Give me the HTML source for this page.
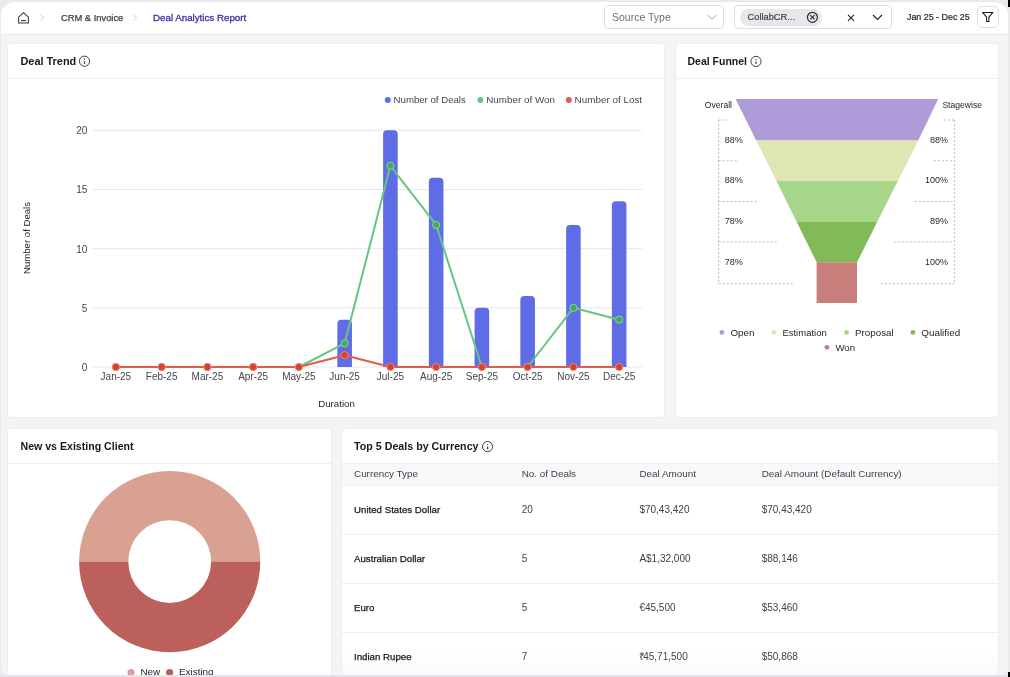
<!DOCTYPE html>
<html><head><meta charset="utf-8">
<style>
*{box-sizing:border-box;margin:0;padding:0}
html,body{width:1010px;height:677px;overflow:hidden;background:#e9eaec;font-family:"Liberation Sans",sans-serif;color:#27272a}
.abs{position:absolute}
#win{position:absolute;left:1px;top:2px;width:1007px;height:674px;background:#f3f4f6;border-radius:14px 14px 8px 8px;overflow:hidden}
#hdr{position:absolute;left:0;top:0;width:1007px;height:33px;background:#fff;border-bottom:1px solid #e8e9ec}
.card{position:absolute;background:#fff;border:1px solid #edeef1;border-radius:4px;overflow:hidden}
.ch{position:absolute;left:0;top:0;right:0;height:35px;border-bottom:1px solid #eceef0}
.title{position:absolute;font-weight:700;font-size:10.6px;color:#18181b;white-space:nowrap;line-height:12px}
.t{position:absolute;white-space:nowrap;line-height:12px}
svg{position:absolute;left:0;top:0}
svg text{font-family:"Liberation Sans",sans-serif}
.th{font-size:9.9px;color:#3f3f46}
.td{font-size:10px;color:#3f3f46}
.td1{font-size:9.7px;color:#18181b;-webkit-text-stroke:0.25px #18181b}
</style></head>
<body>
<div id="root" style="position:absolute;left:0;top:0;width:1010px;height:677px;will-change:transform">
<div id="win">
  <div id="hdr"></div>
</div>
<!-- black corner bits -->
<div class="abs" style="left:1008px;top:0;width:2px;height:7px;background:#000"></div>
<div class="abs" style="left:1008px;top:672px;width:2px;height:5px;background:#000"></div>

<!-- header content -->
<svg width="1010" height="40" style="position:absolute;left:0;top:0">
  <!-- home icon -->
  <path d="M18.6 17.2 L23.5 12.6 L28.4 17.2 V23 H18.6 Z" fill="none" stroke="#3f3f46" stroke-width="1.1" stroke-linejoin="round"/>
  <path d="M21 20.6 H26" stroke="#3f3f46" stroke-width="1.2"/>
  <!-- chevrons -->
  <path d="M40.5 14.8 L43.8 17.7 L40.5 20.6" fill="none" stroke="#cfd1d5" stroke-width="1"/>
  <path d="M133.3 14.8 L136.6 17.7 L133.3 20.6" fill="none" stroke="#cfd1d5" stroke-width="1"/>
</svg>
<div class="t" style="left:61px;top:12px;font-size:9.35px;color:#3f3f46;-webkit-text-stroke:0.25px #3f3f46">CRM &amp; Invoice</div>
<div class="t" style="left:153px;top:12px;font-size:9.75px;color:#3730a3;-webkit-text-stroke:0.3px #3730a3">Deal Analytics Report</div>

<!-- Source type -->
<div class="abs" style="left:604px;top:5px;width:120px;height:24px;border:1px solid #dcdee2;border-radius:4px;background:#fff"></div>
<div class="t" style="left:612px;top:10.8px;font-size:10.5px;color:#6b6e76">Source Type</div>
<!-- Collab -->
<div class="abs" style="left:734px;top:5px;width:158px;height:24px;border:1px solid #dcdee2;border-radius:4px;background:#fff"></div>
<div class="abs" style="left:740px;top:8.5px;width:82px;height:17px;border-radius:9px;background:#e6e7ea"></div>
<div class="t" style="left:747.5px;top:11px;font-size:9.3px;color:#3f3f46;-webkit-text-stroke:0.2px #3f3f46">CollabCR...</div>
<div class="t" style="left:907px;top:11px;font-size:8.9px;color:#27272a;-webkit-text-stroke:0.2px #27272a">Jan 25 - Dec 25</div>
<div class="abs" style="left:977px;top:6px;width:22px;height:22px;border:1px solid #dcdee2;border-radius:5px;background:#fff"></div>
<svg width="1010" height="40" style="position:absolute;left:0;top:0">
  <path d="M708 15.2 L712 19.2 L716 15.2" fill="none" stroke="#a1a4ab" stroke-width="1"/>
  <circle cx="812.4" cy="17.3" r="5" fill="none" stroke="#27272a" stroke-width="1.2"/>
  <path d="M810.3 15.2 L814.5 19.4 M814.5 15.2 L810.3 19.4" stroke="#27272a" stroke-width="1.1"/>
  <path d="M848 14.8 L854 20.8 M854 14.8 L848 20.8" stroke="#27272a" stroke-width="1.2"/>
  <path d="M873 15 L877.5 19.5 L882 15" fill="none" stroke="#27272a" stroke-width="1.2"/>
  <path d="M982.6 12.4 H992.9 L988.9 17.2 V21.4 L986.6 21.4 V17.2 Z" fill="none" stroke="#18181b" stroke-width="1.05" stroke-linejoin="round"/>
</svg>

<!-- Cards -->
<div class="card" style="left:7px;top:43px;width:658px;height:375px"><div class="ch"></div></div>
<div class="card" style="left:675px;top:43px;width:324px;height:375px"><div class="ch"></div></div>
<div class="card" style="left:7px;top:428px;width:325px;height:260px"><div class="ch"></div></div>
<div class="card" style="left:341px;top:428px;width:658px;height:260px"><div class="ch"></div></div>

<div class="title" style="left:20.5px;top:55px;font-size:10.9px">Deal Trend</div>
<div class="title" style="left:687.5px;top:55px;font-size:10.5px">Deal Funnel</div>
<div class="title" style="left:20.5px;top:439.6px;font-size:10.6px">New vs Existing Client</div>
<div class="title" style="left:354px;top:439.6px;font-size:10.7px">Top 5 Deals by Currency</div>
<svg width="1010" height="677" style="position:absolute;left:0;top:0">
<g fill="none" stroke="#3f3f46" stroke-width="1">
<circle cx="84.5" cy="61.2" r="5.1"/><circle cx="756" cy="61.4" r="5.1"/><circle cx="487.6" cy="446.6" r="5.1"/>
</g>
<g stroke="#3f3f46" stroke-width="1.2">
<path d="M84.5 61.2 V63.9"/><path d="M756 61.4 V64.1"/><path d="M487.6 446.6 V449.3"/>
</g>
<g fill="#3f3f46"><circle cx="84.5" cy="59.2" r="0.65"/><circle cx="756" cy="59.4" r="0.65"/><circle cx="487.6" cy="444.6" r="0.65"/></g>
</svg>

<div class="abs" style="left:342px;top:464px;width:656px;height:21.5px;background:#f7f8f9;border-bottom:1px solid #eceef0"></div>
<div class="t th" style="left:354px;top:468px">Currency Type</div>
<div class="t th" style="left:521.7px;top:468px">No. of Deals</div>
<div class="t th" style="left:639.4px;top:468px">Deal Amount</div>
<div class="t th" style="left:761.7px;top:468px">Deal Amount (Default Currency)</div>
<div class="abs" style="left:342px;top:533.6px;width:656px;height:1px;background:#eceef0"></div>
<div class="t td1" style="left:354px;top:503.6px">United States Dollar</div>
<div class="t td" style="left:521.7px;top:503.6px">20</div>
<div class="t td" style="left:639.4px;top:503.6px">$70,43,420</div>
<div class="t td" style="left:761.7px;top:503.6px">$70,43,420</div>
<div class="abs" style="left:342px;top:582.6px;width:656px;height:1px;background:#eceef0"></div>
<div class="t td1" style="left:354px;top:552.6px">Australian Dollar</div>
<div class="t td" style="left:521.7px;top:552.6px">5</div>
<div class="t td" style="left:639.4px;top:552.6px">A$1,32,000</div>
<div class="t td" style="left:761.7px;top:552.6px">$88,146</div>
<div class="abs" style="left:342px;top:631.6px;width:656px;height:1px;background:#eceef0"></div>
<div class="t td1" style="left:354px;top:601.6px">Euro</div>
<div class="t td" style="left:521.7px;top:601.6px">5</div>
<div class="t td" style="left:639.4px;top:601.6px">€45,500</div>
<div class="t td" style="left:761.7px;top:601.6px">$53,460</div>
<div class="t td1" style="left:354px;top:650.6px">Indian Rupee</div>
<div class="t td" style="left:521.7px;top:650.6px">7</div>
<div class="t td" style="left:639.4px;top:650.6px"><span style="margin-right:-2.2px">₹</span>45,71,500</div>
<div class="t td" style="left:761.7px;top:650.6px">$50,868</div>
<svg width="1010" height="677" style="position:absolute;left:0;top:0">
<line x1="93" y1="367" x2="642" y2="367" stroke="#e6e7ea" stroke-width="1"/>
<text x="87.4" y="370.9" text-anchor="end" font-size="10" fill="#45454d">0</text>
<line x1="93" y1="307.82" x2="642" y2="307.82" stroke="#e6e7ea" stroke-width="1"/>
<text x="87.4" y="311.72" text-anchor="end" font-size="10" fill="#45454d">5</text>
<line x1="93" y1="248.65" x2="642" y2="248.65" stroke="#e6e7ea" stroke-width="1"/>
<text x="87.4" y="252.55" text-anchor="end" font-size="10" fill="#45454d">10</text>
<line x1="93" y1="189.48" x2="642" y2="189.48" stroke="#e6e7ea" stroke-width="1"/>
<text x="87.4" y="193.38" text-anchor="end" font-size="10" fill="#45454d">15</text>
<line x1="93" y1="130.3" x2="642" y2="130.3" stroke="#e6e7ea" stroke-width="1"/>
<text x="87.4" y="134.2" text-anchor="end" font-size="10" fill="#45454d">20</text>
<path d="M337.35 367 V323.66 Q337.35 319.66 341.35 319.66 H347.95 Q351.95 319.66 351.95 323.66 V367 Z" fill="#5e6de6"/>
<path d="M383.1 367 V134.3 Q383.1 130.3 387.1 130.3 H393.7 Q397.7 130.3 397.7 134.3 V367 Z" fill="#5e6de6"/>
<path d="M428.85 367 V181.64 Q428.85 177.64 432.85 177.64 H439.45 Q443.45 177.64 443.45 181.64 V367 Z" fill="#5e6de6"/>
<path d="M474.6 367 V311.82 Q474.6 307.82 478.6 307.82 H485.2 Q489.2 307.82 489.2 311.82 V367 Z" fill="#5e6de6"/>
<path d="M520.35 367 V299.99 Q520.35 295.99 524.35 295.99 H530.95 Q534.95 295.99 534.95 299.99 V367 Z" fill="#5e6de6"/>
<path d="M566.1 367 V228.98 Q566.1 224.98 570.1 224.98 H576.7 Q580.7 224.98 580.7 228.98 V367 Z" fill="#5e6de6"/>
<path d="M611.85 367 V205.31 Q611.85 201.31 615.85 201.31 H622.45 Q626.45 201.31 626.45 205.31 V367 Z" fill="#5e6de6"/>
<text x="115.9" y="379.6" text-anchor="middle" font-size="10" fill="#45454d">Jan-25</text>
<text x="161.65" y="379.6" text-anchor="middle" font-size="10" fill="#45454d">Feb-25</text>
<text x="207.4" y="379.6" text-anchor="middle" font-size="10" fill="#45454d">Mar-25</text>
<text x="253.15" y="379.6" text-anchor="middle" font-size="10" fill="#45454d">Apr-25</text>
<text x="298.9" y="379.6" text-anchor="middle" font-size="10" fill="#45454d">May-25</text>
<text x="344.65" y="379.6" text-anchor="middle" font-size="10" fill="#45454d">Jun-25</text>
<text x="390.4" y="379.6" text-anchor="middle" font-size="10" fill="#45454d">Jul-25</text>
<text x="436.15" y="379.6" text-anchor="middle" font-size="10" fill="#45454d">Aug-25</text>
<text x="481.9" y="379.6" text-anchor="middle" font-size="10" fill="#45454d">Sep-25</text>
<text x="527.65" y="379.6" text-anchor="middle" font-size="10" fill="#45454d">Oct-25</text>
<text x="573.4" y="379.6" text-anchor="middle" font-size="10" fill="#45454d">Nov-25</text>
<text x="619.15" y="379.6" text-anchor="middle" font-size="10" fill="#45454d">Dec-25</text>
<polyline points="115.9,367 161.65,367 207.4,367 253.15,367 298.9,367 344.65,343.33 390.4,165.81 436.15,224.98 481.9,367 527.65,367 573.4,307.82 619.15,319.66" fill="none" stroke="#66c582" stroke-width="2" stroke-linejoin="round"/>
<circle cx="115.9" cy="367" r="3.6" fill="#4aa85c" stroke="#86d69b" stroke-width="1"/>
<circle cx="161.65" cy="367" r="3.6" fill="#4aa85c" stroke="#86d69b" stroke-width="1"/>
<circle cx="207.4" cy="367" r="3.6" fill="#4aa85c" stroke="#86d69b" stroke-width="1"/>
<circle cx="253.15" cy="367" r="3.6" fill="#4aa85c" stroke="#86d69b" stroke-width="1"/>
<circle cx="298.9" cy="367" r="3.6" fill="#4aa85c" stroke="#86d69b" stroke-width="1"/>
<circle cx="344.65" cy="343.33" r="3.6" fill="#4aa85c" stroke="#86d69b" stroke-width="1"/>
<circle cx="390.4" cy="165.81" r="3.6" fill="#4aa85c" stroke="#86d69b" stroke-width="1"/>
<circle cx="436.15" cy="224.98" r="3.6" fill="#4aa85c" stroke="#86d69b" stroke-width="1"/>
<circle cx="481.9" cy="367" r="3.6" fill="#4aa85c" stroke="#86d69b" stroke-width="1"/>
<circle cx="527.65" cy="367" r="3.6" fill="#4aa85c" stroke="#86d69b" stroke-width="1"/>
<circle cx="573.4" cy="307.82" r="3.6" fill="#4aa85c" stroke="#86d69b" stroke-width="1"/>
<circle cx="619.15" cy="319.66" r="3.6" fill="#4aa85c" stroke="#86d69b" stroke-width="1"/>
<polyline points="115.9,367 161.65,367 207.4,367 253.15,367 298.9,367 344.65,355.17 390.4,367 436.15,367 481.9,367 527.65,367 573.4,367 619.15,367" fill="none" stroke="#e05c4d" stroke-width="2" stroke-linejoin="round"/>
<circle cx="115.9" cy="367" r="3.6" fill="#d9402f" stroke="#ee8576" stroke-width="1"/>
<circle cx="161.65" cy="367" r="3.6" fill="#d9402f" stroke="#ee8576" stroke-width="1"/>
<circle cx="207.4" cy="367" r="3.6" fill="#d9402f" stroke="#ee8576" stroke-width="1"/>
<circle cx="253.15" cy="367" r="3.6" fill="#d9402f" stroke="#ee8576" stroke-width="1"/>
<circle cx="298.9" cy="367" r="3.6" fill="#d9402f" stroke="#ee8576" stroke-width="1"/>
<circle cx="344.65" cy="355.17" r="3.6" fill="#d9402f" stroke="#ee8576" stroke-width="1"/>
<circle cx="390.4" cy="367" r="3.6" fill="#d9402f" stroke="#ee8576" stroke-width="1"/>
<circle cx="436.15" cy="367" r="3.6" fill="#d9402f" stroke="#ee8576" stroke-width="1"/>
<circle cx="481.9" cy="367" r="3.6" fill="#d9402f" stroke="#ee8576" stroke-width="1"/>
<circle cx="527.65" cy="367" r="3.6" fill="#d9402f" stroke="#ee8576" stroke-width="1"/>
<circle cx="573.4" cy="367" r="3.6" fill="#d9402f" stroke="#ee8576" stroke-width="1"/>
<circle cx="619.15" cy="367" r="3.6" fill="#d9402f" stroke="#ee8576" stroke-width="1"/>
<circle cx="387.8" cy="100" r="3" fill="#5e6de6"/>
<text x="393.6" y="103.4" font-size="9.65" fill="#45454d">Number of Deals</text>
<circle cx="480.4" cy="100" r="3" fill="#66c582"/>
<text x="486.2" y="103.4" font-size="9.85" fill="#45454d">Number of Won</text>
<circle cx="568.8" cy="100" r="3" fill="#e05c4d"/>
<text x="574.6" y="103.4" font-size="9.9" fill="#45454d">Number of Lost</text>
<text x="336.5" y="406.5" text-anchor="middle" font-size="9.7" fill="#27272a">Duration</text>
<text transform="translate(30.1 238) rotate(-90)" text-anchor="middle" font-size="9.6" fill="#27272a">Number of Deals</text>
</svg>
<svg width="1010" height="677" style="position:absolute;left:0;top:0">
<path d="M735.6 99 H938.2 L918.2 140.4 H756.2 Z" fill="#ae9bd8"/>
<path d="M756.2 140.4 H918.2 L897.8 181 H776.4 Z" fill="#dfe6b3"/>
<path d="M776.4 181 H897.8 L877.4 221.6 H796.5 Z" fill="#a7d68a"/>
<path d="M796.5 221.6 H877.4 L857 262.2 H816.6 Z" fill="#80bb56"/>
<rect x="816.6" y="262.2" width="40.4" height="40.8" fill="#c9807d"/>
<line x1="718.6" y1="120" x2="718.6" y2="284" stroke="#babdc3" stroke-width="1" stroke-dasharray="2 2"/>
<line x1="718.6" y1="120" x2="728" y2="120" stroke="#babdc3" stroke-width="1" stroke-dasharray="2 2"/>
<line x1="718.6" y1="160.8" x2="738.7" y2="160.8" stroke="#babdc3" stroke-width="1" stroke-dasharray="2 2"/>
<line x1="718.6" y1="201.5" x2="758" y2="201.5" stroke="#babdc3" stroke-width="1" stroke-dasharray="2 2"/>
<line x1="718.6" y1="242" x2="778.7" y2="242" stroke="#babdc3" stroke-width="1" stroke-dasharray="2 2"/>
<line x1="718.6" y1="283.6" x2="793" y2="283.6" stroke="#babdc3" stroke-width="1" stroke-dasharray="2 2"/>
<line x1="954.4" y1="120" x2="954.4" y2="284" stroke="#babdc3" stroke-width="1" stroke-dasharray="2 2"/>
<line x1="944" y1="120" x2="954.4" y2="120" stroke="#babdc3" stroke-width="1" stroke-dasharray="2 2"/>
<line x1="934" y1="160.8" x2="954.4" y2="160.8" stroke="#babdc3" stroke-width="1" stroke-dasharray="2 2"/>
<line x1="914.7" y1="201.5" x2="954.4" y2="201.5" stroke="#babdc3" stroke-width="1" stroke-dasharray="2 2"/>
<line x1="893.6" y1="242" x2="954.4" y2="242" stroke="#babdc3" stroke-width="1" stroke-dasharray="2 2"/>
<line x1="880.6" y1="283.6" x2="954.4" y2="283.6" stroke="#babdc3" stroke-width="1" stroke-dasharray="2 2"/>
<text x="724.8" y="142.8" font-size="9" fill="#27272a">88%</text>
<text x="724.8" y="183.4" font-size="9" fill="#27272a">88%</text>
<text x="724.8" y="224" font-size="9" fill="#27272a">78%</text>
<text x="724.8" y="264.6" font-size="9" fill="#27272a">78%</text>
<text x="948" y="142.8" text-anchor="end" font-size="9" fill="#27272a">88%</text>
<text x="948" y="183.4" text-anchor="end" font-size="9" fill="#27272a">100%</text>
<text x="948" y="224" text-anchor="end" font-size="9" fill="#27272a">89%</text>
<text x="948" y="264.6" text-anchor="end" font-size="9" fill="#27272a">100%</text>
<text x="732" y="108" text-anchor="end" font-size="8.6" fill="#27272a">Overall</text>
<text x="942.4" y="108" font-size="8.6" fill="#27272a">Stagewise</text>
<circle cx="721.9" cy="332.4" r="2.4" fill="#ae9bd8"/>
<text x="730.4" y="335.8" font-size="9.8" fill="#27272a">Open</text>
<circle cx="773.9" cy="332.4" r="2.4" fill="#dfe6b3"/>
<text x="782.4" y="335.8" font-size="9.5" fill="#27272a">Estimation</text>
<circle cx="846.6" cy="332.4" r="2.4" fill="#a7d68a"/>
<text x="855" y="335.8" font-size="9.8" fill="#27272a">Proposal</text>
<circle cx="912.9" cy="332.4" r="2.4" fill="#80bb56"/>
<text x="921.3" y="335.8" font-size="9.85" fill="#27272a">Qualified</text>
<circle cx="826.9" cy="347.3" r="2.4" fill="#c9807d"/>
<text x="835.4" y="350.7" font-size="9.7" fill="#27272a">Won</text>
</svg>
<svg width="1010" height="677" style="position:absolute;left:0;top:0">
<path d="M79.1 561.6 A90.6 90.6 0 0 1 260.3 561.6 H211.1 A41.4 41.4 0 0 0 128.3 561.6 Z" fill="#d9a191"/>
<path d="M79.1 561.6 A90.6 90.6 0 0 0 260.3 561.6 H211.1 A41.4 41.4 0 0 1 128.3 561.6 Z" fill="#bc605c"/>
<circle cx="131" cy="672.6" r="3.6" fill="#daa098"/>
<text x="140.4" y="675.2" font-size="9.9" fill="#27272a">New</text>
<circle cx="169.6" cy="672.6" r="3.6" fill="#bc605c"/>
<text x="179" y="675.2" font-size="9.9" fill="#27272a">Existing</text>
</svg>
<div class="abs" style="left:342px;top:652px;width:656px;height:24px;background:linear-gradient(rgba(0,0,0,0),rgba(0,0,0,0.025))"></div>
<div class="abs" style="left:0;top:675px;width:1010px;height:2px;background:#e3e4e7"></div>
<div class="abs" style="left:1008px;top:672px;width:2px;height:5px;background:#000"></div>
</div>
</body></html>
